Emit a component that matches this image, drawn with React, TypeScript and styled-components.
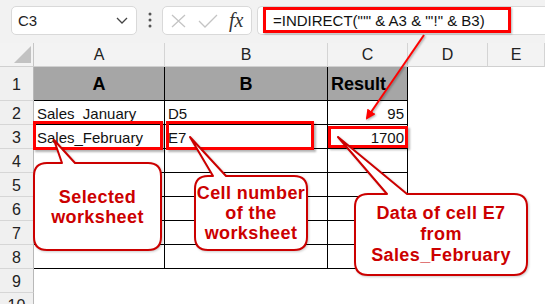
import styled, { createGlobalStyle } from "styled-components";
import type { ReactNode } from "react";

const GlobalStyle = createGlobalStyle`
  html, body {
    margin: 0;
    background: #ffffff;
    font-family: "Liberation Sans", Arial, sans-serif;
  }
`;

const RED = "#ff0000";
const CALLOUT_RED = "#cc0000";

interface HighlightSpec {
  left: number;
  top: number;
  width: number;
  height: number;
}

interface CellSpec {
  text?: string;
  align?: "left" | "center" | "right";
  highlight?: HighlightSpec;
}

// rows 2..8 of the sheet, columns A..C
const dataRows: CellSpec[][] = [
  [{ text: "Sales_January" }, { text: "D5" }, { text: "95", align: "right" }],
  [
    { text: "Sales_February", highlight: { left: -1, top: -4, width: 130, height: 29 } },
    { text: "E7", highlight: { left: 1, top: -4, width: 148, height: 29 } },
    { text: "1700", align: "right", highlight: { left: 0, top: 1, width: 80, height: 22 } },
  ],
  [{}, {}, {}],
  [{}, {}, {}],
  [{}, {}, {}],
  [{}, {}, {}],
  [{}, {}, {}],
];

const CellHighlight = ({ spec }: { spec: HighlightSpec }) => (
  <Highlight $l={spec.left} $t={spec.top} $w={spec.width} $h={spec.height} />
);

interface CalloutProps {
  x: number;
  y: number;
  w: number;
  h: number;
  base: [number, number];
  tip: [number, number];
  lineHeight: number;
  children: ReactNode;
}

const calloutPath = (w: number, h: number, base: [number, number], tip: [number, number]) => {
  const r = 14;
  const [b1, b2] = base;
  const [tx, ty] = tip;
  return [
    `M ${r} 1`,
    `L ${b1} 1 L ${tx} ${ty} L ${b2} 1`,
    `L ${w - r} 1`,
    `Q ${w - 1} 1 ${w - 1} ${r}`,
    `L ${w - 1} ${h - r}`,
    `Q ${w - 1} ${h - 1} ${w - r} ${h - 1}`,
    `L ${r} ${h - 1}`,
    `Q 1 ${h - 1} 1 ${h - r}`,
    `L 1 ${r}`,
    `Q 1 1 ${r} 1 Z`,
  ].join(" ");
};

const Callout = ({ x, y, w, h, base, tip, lineHeight, children }: CalloutProps) => (
  <CalloutBox $x={x} $y={y} $w={w} $h={h}>
    <CalloutShape width={w} height={h}>
      <path d={calloutPath(w, h, base, tip)} fill="#ffffff" stroke={CALLOUT_RED} strokeWidth={2} strokeLinejoin="round" />
    </CalloutShape>
    <CalloutText $lh={lineHeight}>{children}</CalloutText>
  </CalloutBox>
);

const App = () => {
  const rowHeaders = [1, 2, 3, 4, 5, 6, 7, 8, 9, 10];

  return (
    <>
      <GlobalStyle />
      <Page>
        <TopBar>
          <NameBox>
            <span>C3</span>
            <svg width="12" height="7" viewBox="0 0 12 7">
              <path d="M1 1 L6 6 L11 1" fill="none" stroke="#444" strokeWidth="1.3" />
            </svg>
          </NameBox>
          <Dots>
            <svg width="4" height="16" viewBox="0 0 4 16">
              <circle cx="2" cy="2" r="1.5" fill="#555" />
              <circle cx="2" cy="8" r="1.5" fill="#555" />
              <circle cx="2" cy="14" r="1.5" fill="#555" />
            </svg>
          </Dots>
          <FxBox>
            <svg width="15" height="14" viewBox="0 0 15 14">
              <path d="M1 1 L14 13 M14 1 L1 13" stroke="#c4c4c4" strokeWidth="1.3" fill="none" />
            </svg>
            <svg width="20" height="14" viewBox="0 0 20 14">
              <path d="M1 7 L7 13 L19 1" stroke="#c4c4c4" strokeWidth="1.3" fill="none" />
            </svg>
            <FxLabel>fx</FxLabel>
          </FxBox>
          <FormulaBox>
            <FormulaHighlight>=INDIRECT("'" &amp; A3 &amp; "'!" &amp; B3)</FormulaHighlight>
          </FormulaBox>
        </TopBar>

        <Sheet>
          <CornerCell />
          <ColHeader>A</ColHeader>
          <ColHeader>B</ColHeader>
          <ColHeader>C</ColHeader>
          <ColHeader>D</ColHeader>
          <ColHeader>E</ColHeader>

          <RowHeader>{rowHeaders[0]}</RowHeader>
          <TitleCell $align="center">A</TitleCell>
          <TitleCell $align="center">B</TitleCell>
          <TitleCell $align="left">Result</TitleCell>
          <EmptyCell />
          <EmptyCell />

          {dataRows.map((row, r) => (
            <Row key={r}>
              <RowHeader>{rowHeaders[r + 1]}</RowHeader>
              {row.map((cell, c) => (
                <DataCell key={c} $align={cell.align ?? "left"} $relative={!!cell.highlight}>
                  {cell.text}
                  {cell.highlight && <CellHighlight spec={cell.highlight} />}
                </DataCell>
              ))}
              <EmptyCell />
              <EmptyCell />
            </Row>
          ))}

          {[9, 10].map((n) => (
            <Row key={n}>
              <RowHeader>{n}</RowHeader>
              <EmptyCell />
              <EmptyCell />
              <EmptyCell />
              <EmptyCell />
              <EmptyCell />
            </Row>
          ))}
        </Sheet>

        <Callout x={33} y={162} w={129} h={89} base={[29, 42]} tip={[21, -22]} lineHeight={20}>
          Selected
          <br />
          worksheet
        </Callout>
        <Callout x={194} y={175} w={114} h={76} base={[19, 32]} tip={[-4, -38]} lineHeight={20}>
          Cell number
          <br />
          of the
          <br />
          worksheet
        </Callout>
        <Callout x={354} y={193} w={174} h={83} base={[33, 53]} tip={[-16, -56]} lineHeight={21}>
          Data of cell E7
          <br />
          from
          <br />
          Sales_February
        </Callout>

        <ArrowLayer width="545" height="304" viewBox="0 0 545 304">
          <defs>
            <marker id="head" markerWidth="10" markerHeight="10" refX="8" refY="5" orient="auto" markerUnits="userSpaceOnUse">
              <path d="M0 0 L10 5 L0 10 Z" fill={RED} />
            </marker>
          </defs>
          <line x1="424" y1="35" x2="367" y2="118" stroke={RED} strokeWidth="2" markerEnd="url(#head)" />
        </ArrowLayer>
      </Page>
    </>
  );
};

const Page = styled.div`
  position: relative;
  width: 545px;
  height: 304px;
  overflow: hidden;
  background: #ffffff;
`;

const TopBar = styled.div`
  display: flex;
  align-items: flex-start;
  height: 43px;
  box-sizing: border-box;
  padding: 6px 0 0 11px;
  background: #f2f2f2;
`;

const NameBox = styled.div`
  display: flex;
  align-items: center;
  justify-content: space-between;
  width: 126px;
  height: 29px;
  box-sizing: border-box;
  padding: 0 8px 0 6px;
  background: #ffffff;
  border: 1px solid #d9d9d9;
  border-radius: 5px;
  font-size: 15px;
  color: #222;
`;

const Dots = styled.div`
  display: flex;
  align-items: center;
  justify-content: center;
  width: 25px;
  height: 27px;
`;

const FxBox = styled.div`
  display: flex;
  align-items: center;
  gap: 12px;
  width: 90px;
  height: 29px;
  box-sizing: border-box;
  padding: 0 0 0 8px;
  background: #ffffff;
  border: 1px solid #d9d9d9;
  border-radius: 5px;
`;

const FxLabel = styled.span`
  font-family: "Liberation Serif", "DejaVu Serif", serif;
  font-style: italic;
  font-size: 20px;
  color: #333;
  margin-left: -1px;
`;

const FormulaBox = styled.div`
  flex: 1;
  height: 29px;
  margin-left: 5px;
  box-sizing: border-box;
  padding: 0 0 0 5px;
  background: #ffffff;
  border: 1px solid #d9d9d9;
  border-right: none;
  border-radius: 5px 0 0 5px;
`;

const FormulaHighlight = styled.div`
  display: flex;
  align-items: center;
  width: 248px;
  height: 26px;
  box-sizing: border-box;
  padding-left: 7px;
  border: 3px solid ${RED};
  font-size: 15px;
  color: #111;
  white-space: pre;
  box-shadow: 1px 1px 2px rgba(0, 0, 0, 0.3);
`;

const Sheet = styled.div`
  display: grid;
  grid-template-columns: 34px 131px 163px 80px 80px 1fr;
  grid-template-rows: 24px 34px repeat(9, 24px);
  font-size: 15px;
  color: #111;
`;

const Row = styled.div`
  display: contents;
`;

const CornerCell = styled.div`
  position: relative;
  background: #f3f3f3;
  border-right: 1px solid #c6c6c6;
  border-bottom: 1px solid #d0d0d0;

  &::after {
    content: "";
    position: absolute;
    right: 2px;
    bottom: 3px;
    width: 17px;
    height: 17px;
    background: #c2c2c2;
    clip-path: polygon(100% 0, 100% 100%, 0 100%);
  }
`;

const ColHeader = styled.div`
  display: flex;
  align-items: center;
  justify-content: center;
  padding-top: 1px;
  background: #f3f3f3;
  border-right: 1px solid #d4d4d4;
  border-bottom: 1px solid #d0d0d0;
  font-size: 16px;
  color: #222;
`;

const RowHeader = styled.div`
  display: flex;
  align-items: center;
  justify-content: center;
  padding-top: 2px;
  box-sizing: border-box;
  background: #f0f0f0;
  border-right: 1px solid #b8b8b8;
  border-bottom: 1px solid #d6d6d6;
  font-size: 16px;
  color: #222;
`;

const justify = { left: "flex-start", center: "center", right: "flex-end" };

const TitleCell = styled.div<{ $align: "left" | "center" }>`
  display: flex;
  align-items: center;
  justify-content: ${({ $align }) => justify[$align]};
  padding: 1px 3px 0;
  background: #a6a6a6;
  border-right: 1px solid #000;
  border-bottom: 1px solid #000;
  font-weight: bold;
  font-size: 18px;
  color: #000;
`;

const DataCell = styled.div<{ $align: "left" | "center" | "right"; $relative: boolean }>`
  position: ${({ $relative }) => ($relative ? "relative" : "static")};
  display: flex;
  align-items: center;
  justify-content: ${({ $align }) => justify[$align]};
  padding: 2px 3px 0;
  background: #ffffff;
  border-right: 1px solid #000;
  border-bottom: 1px solid #000;
  white-space: nowrap;
`;

const EmptyCell = styled.div`
  background: #ffffff;
`;

const Highlight = styled.div<{ $l: number; $t: number; $w: number; $h: number }>`
  position: absolute;
  left: ${({ $l }) => $l}px;
  top: ${({ $t }) => $t}px;
  width: ${({ $w }) => $w}px;
  height: ${({ $h }) => $h}px;
  box-sizing: border-box;
  border: 3px solid ${RED};
  box-shadow: 2px 2px 2px rgba(0, 0, 0, 0.3);
`;

const CalloutBox = styled.div<{ $x: number; $y: number; $w: number; $h: number }>`
  position: absolute;
  left: ${({ $x }) => $x}px;
  top: ${({ $y }) => $y}px;
  width: ${({ $w }) => $w}px;
  height: ${({ $h }) => $h}px;
  display: flex;
  align-items: center;
  justify-content: center;
`;

const CalloutShape = styled.svg`
  position: absolute;
  left: 0;
  top: 0;
  overflow: visible;
  filter: drop-shadow(1px 1px 1px rgba(0, 0, 0, 0.2));
`;

const CalloutText = styled.div<{ $lh: number }>`
  position: relative;
  text-align: center;
  font-weight: bold;
  font-size: 18px;
  letter-spacing: 0.4px;
  line-height: ${({ $lh }) => $lh}px;
  color: ${CALLOUT_RED};
`;

const ArrowLayer = styled.svg`
  position: absolute;
  left: 0;
  top: 0;
  pointer-events: none;
  filter: drop-shadow(1.5px 1.5px 1px rgba(0, 0, 0, 0.35));
`;

export default App;
